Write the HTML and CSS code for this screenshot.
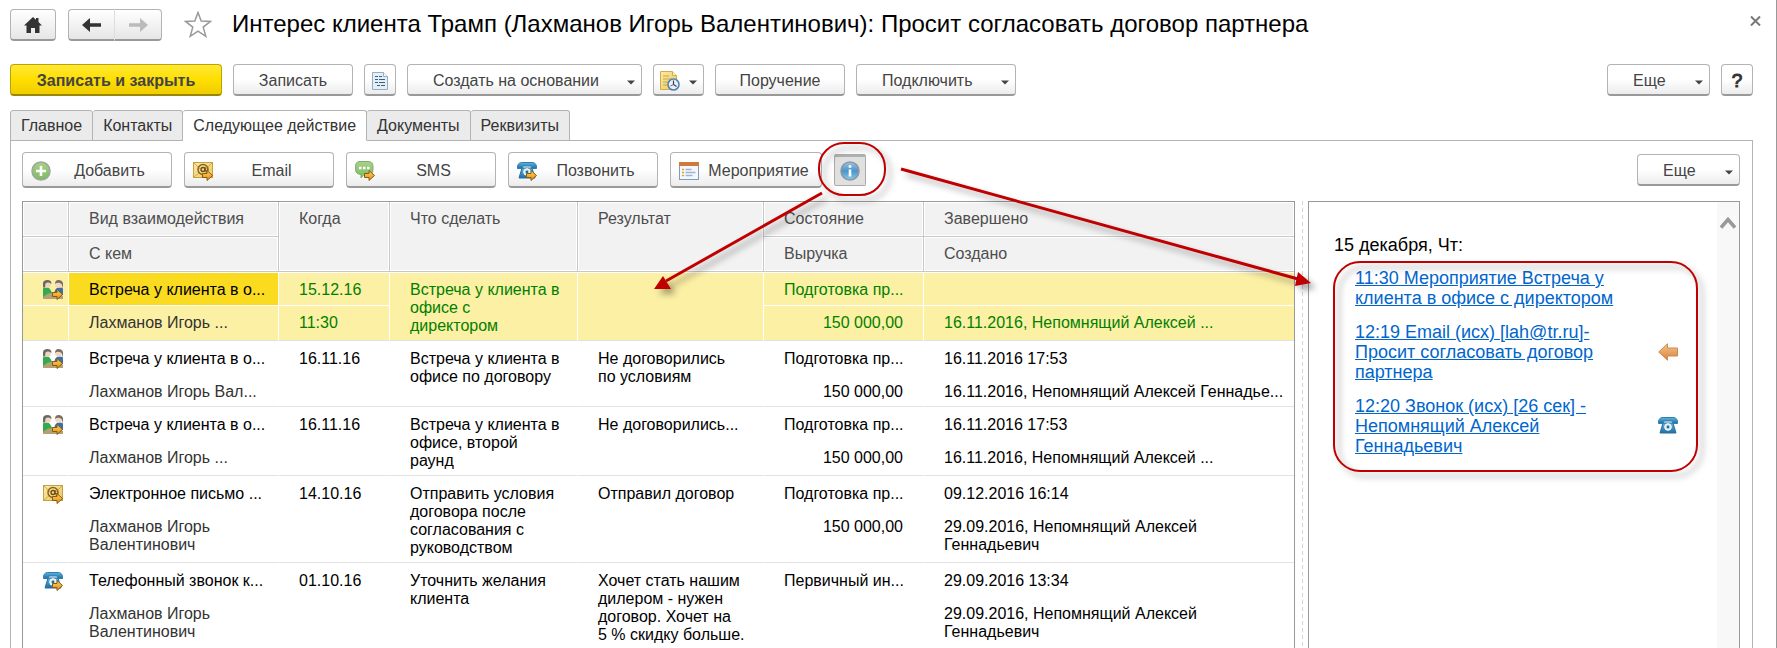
FILE: index.html
```
<!DOCTYPE html>
<html lang="ru">
<head>
<meta charset="utf-8">
<title>Интерес клиента Трамп</title>
<link rel="stylesheet" href="styles.css">
</head>
<body>
<svg class="defs" aria-hidden="true">
  <defs>
    <linearGradient id="gold" x1="0" y1="0" x2="0" y2="1"><stop offset="0" stop-color="#ffd766"/><stop offset="1" stop-color="#e08a10"/></linearGradient>
    <linearGradient id="blue" x1="0" y1="0" x2="0" y2="1"><stop offset="0" stop-color="#5fb4e0"/><stop offset="1" stop-color="#1d6ea3"/></linearGradient>
    <linearGradient id="sky" x1="0" y1="0" x2="0" y2="1"><stop offset="0" stop-color="#9cc4e4"/><stop offset=".5" stop-color="#4a94cc"/><stop offset="1" stop-color="#86cdec"/></linearGradient>
    <linearGradient id="green" x1="0" y1="0" x2="0" y2="1"><stop offset="0" stop-color="#a9d08e"/><stop offset="1" stop-color="#7dbb5e"/></linearGradient>
    <linearGradient id="paper" x1="0" y1="0" x2="1" y2="1"><stop offset="0" stop-color="#fbe9a6"/><stop offset="1" stop-color="#ecc85f"/></linearGradient>
    <linearGradient id="orange" x1="0" y1="0" x2="0" y2="1"><stop offset="0" stop-color="#f6c48e"/><stop offset="1" stop-color="#d98338"/></linearGradient>
    <symbol id="go" viewBox="0 0 20 20"><path d="M9.500 12.500h4.500v-3l5.500 5-5.500 5v-3H9.500z" fill="url(#gold)" stroke="#8a5a10"/></symbol>
    <symbol id="i-mail" viewBox="0 0 20 20"><rect x=".5" y="1.500" width="19" height="15" fill="url(#paper)" stroke="#c9a040"/><path d="M1 2l6 6M19 2l-6 6M1 16l6-5" stroke="#d3ab4e" fill="none"/><circle cx="10" cy="8.500" r="5" fill="none" stroke="#8a6420" stroke-width="1.500"/><circle cx="10" cy="8.500" r="2" fill="none" stroke="#6e4d14" stroke-width="1.400"/><path d="M12 6v3.500q1.500 1.500 3-1" fill="none" stroke="#6e4d14" stroke-width="1.200"/><use href="#go"/></symbol>
    <symbol id="i-phone-plain" viewBox="0 0 20 20"><path d="M5 7h10l3 10H2z" fill="url(#blue)" stroke="#2b6f9c"/><path d="M.5 7.500Q0 2 4.500 1.500h11Q20 2 19.500 7.500H15L14 5H6L5 7.500z" fill="url(#blue)" stroke="#2f7eae"/><circle cx="10" cy="11" r="3.300" fill="#cfe8f6" stroke="#fff"/><circle cx="10" cy="11" r="1.400" fill="#256c9b"/></symbol>
    <symbol id="i-phone" viewBox="0 0 20 20"><use href="#i-phone-plain"/><use href="#go"/></symbol>
    <symbol id="i-people" viewBox="0 0 20 20"><path d="M0 19v-3l5-4h10l5 4v3z" fill="#b3a073"/><path d="M0 17V9q0-1.500 3-1.500h2q2.500 1 4 5.500l-4 .5z" fill="#35a852"/><path d="M20 15V8.500q-1-1-3-1h-2q-3 1-3.500 4.500l4 2z" fill="#3b6fa8"/><circle cx="4.500" cy="4.500" r="3.300" fill="#ecd6bd"/><circle cx="15.500" cy="4.500" r="3.300" fill="#f0d9c2"/><path d="M0 7.500V3Q.5 0 4.500 0T8.500 4Q5 1.500 2.500 3.500L2 7.500z" fill="#6b6a62"/><path d="M12 4Q12 0 15.500 0T20 3v5.500L18.500 4Q15 1.500 12 4z" fill="#7d6f62"/><use href="#go"/></symbol>
    <symbol id="caret" viewBox="0 0 8 5"><path d="M0 .5h8L4 4.500z" fill="#444"/></symbol>
  </defs>
</svg>

<main class="window">
  <header class="title-bar">
    <button class="btn icon-btn home" aria-label="Домой"><svg width="18" height="16" viewBox="0 0 18 16"><path d="M9 0L0 8.500h2.500V16H7v-5h4v5h4.500V8.500H18L14.500 5V1h-2.500v1.800z" fill="#333"/></svg></button>
    <div class="nav-pair">
      <button class="btn icon-btn" aria-label="Назад"><svg width="19" height="14" viewBox="0 0 19 14"><path d="M0 7l8-7v5.200h11v3.600H8V14z" fill="#333"/></svg></button>
      <button class="btn icon-btn" aria-label="Вперед"><svg width="19" height="14" viewBox="0 0 19 14"><path d="M19 7l-8-7v5.200H0v3.600h11V14z" fill="#bbb"/></svg></button>
    </div>
    <button class="star" aria-label="Избранное"><svg width="28" height="27" viewBox="0 0 28 27"><path d="M14 1.500l3.200 8.500 9.300.4-7.300 5.700 2.600 9.200L14 20.100l-7.800 5.200 2.600-9.200L1.500 10.400l9.300-.4z" fill="#fff" stroke="#999" stroke-width="1.500"/></svg></button>
    <h1>Интерес клиента Трамп (Лахманов Игорь Валентинович): Просит согласовать договор партнера</h1>
    <button class="close" aria-label="Закрыть"><svg width="11" height="10" viewBox="0 0 11 10"><path d="M1 .5l9 9M10 .5l-9 9" stroke="#777" stroke-width="2"/></svg></button>
  </header>

  <div class="command-bar">
    <button class="btn primary">Записать и закрыть</button>
    <button class="btn save">Записать</button>
    <button class="btn icon-btn square" aria-label="Отчет"><svg width="16" height="18" viewBox="0 0 16 18"><path d="M.5.500h11l4 4v13H.5z" fill="#e3eef6" stroke="#8fafc6"/><path d="M11.500.500v4h4" fill="#fff" stroke="#8fafc6"/><path d="M3 4.500h3M7 4.500h3M3 7.500h3M7 7.500h6M3 10.500h3M7 10.500h6M5 13.500h3M9 13.500h4" stroke="#3d5f80" stroke-width="1.200"/></svg></button>
    <button class="btn menu create"><span>Создать на основании</span><svg class="caret"><use href="#caret"/></svg></button>
    <button class="btn menu remind" aria-label="Напоминание"><svg width="20" height="20" viewBox="0 0 20 20"><path d="M.5.500h12l4 4v14H.5z" fill="url(#paper)" stroke="#d2ad4a"/><path d="M12.500.500v4h4" fill="#fff5cc" stroke="#d2ad4a"/><path d="M3 5h6M3 8h9M3 11h5M3 14h4" stroke="#c7a548"/><circle cx="13.500" cy="13.500" r="5.500" fill="#e8f1fa" stroke="#4f83b8" stroke-width="1.600"/><path d="M13.500 9.500v4l3 2" fill="none" stroke="#345" stroke-width="1.200"/><path d="M13.500 13.500L10.500 15" stroke="#d33"/></svg><svg class="caret"><use href="#caret"/></svg></button>
    <button class="btn task">Поручение</button>
    <button class="btn menu connect"><span>Подключить</span><svg class="caret"><use href="#caret"/></svg></button>
    <button class="btn menu more push"><span>Еще</span><svg class="caret"><use href="#caret"/></svg></button>
    <button class="btn square help">?</button>
  </div>

  <div class="tabs" role="tablist">
    <button class="tab" role="tab">Главное</button>
    <button class="tab" role="tab">Контакты</button>
    <button class="tab active" role="tab" aria-selected="true">Следующее действие</button>
    <button class="tab" role="tab">Документы</button>
    <button class="tab" role="tab">Реквизиты</button>
  </div>

  <section class="panel">
    <div class="toolbar">
      <button class="btn tool"><svg width="20" height="20" viewBox="0 0 20 20"><circle cx="10" cy="10" r="9" fill="url(#green)" stroke="#9aa89a" stroke-width="1.500"/><path d="M10 5v10M5 10h10" stroke="#fff" stroke-width="2.600"/></svg><span>Добавить</span></button>
      <button class="btn tool"><svg width="20" height="20"><use href="#i-mail"/></svg><span>Email</span></button>
      <button class="btn tool"><svg width="20" height="20" viewBox="0 0 20 20"><path d="M5 .5h8q5 0 5 5v3q0 5-5 5H9L6 17v-3.500Q.5 13 .5 8.500v-3q0-5 4.500-5z" fill="url(#green)" stroke="#7fae68"/><path d="M4 7h2.500M8 7h2.500M12 7h2.500" stroke="#fff" stroke-width="2.400"/><use href="#go"/></svg><span>SMS</span></button>
      <button class="btn tool"><svg width="20" height="20"><use href="#i-phone"/></svg><span>Позвонить</span></button>
      <button class="btn tool event"><svg width="20" height="20" viewBox="0 0 20 20"><rect x=".5" y="1.500" width="19" height="17" fill="#f4f8fc" stroke="#7d9cba"/><path d="M0 1h20v4H0z" fill="#cf7a3a"/><path d="M3 8.500h2M3 11.500h2M3 14.500h2" stroke="#e0a030" stroke-width="1.500"/><path d="M6.500 8.500h6M6.500 11.500h10M6.500 14.500h7" stroke="#9fb4cc" stroke-width="1.300"/></svg><span>Мероприятие</span></button>
      <button class="btn square pressed" aria-label="Информация" aria-pressed="true"><svg width="20" height="20" viewBox="0 0 20 20"><circle cx="10" cy="10" r="9" fill="url(#sky)" stroke="#8f999f" stroke-width="1.600"/><path d="M10 4.300v2.400M10 8.500v7" stroke="#fff" stroke-width="2.600"/></svg></button>
      <button class="btn menu more push"><span>Еще</span><svg class="caret"><use href="#caret"/></svg></button>
    </div>

    <div class="split">
      <div class="grid-box">
        <table>
          <colgroup><col class="c-icon"><col class="c-kind"><col class="c-when"><col class="c-todo"><col class="c-result"><col class="c-state"><col></colgroup>
          <thead>
            <tr><th></th><th>Вид взаимодействия</th><th rowspan="2">Когда</th><th rowspan="2">Что сделать</th><th rowspan="2">Результат</th><th>Состояние</th><th>Завершено</th></tr>
            <tr><th></th><th>С кем</th><th>Выручка</th><th>Создано</th></tr>
          </thead>
          <tbody class="selected">
            <tr class="first"><td class="ico"><svg width="20" height="20"><use href="#i-people"/></svg></td><td class="current">Встреча у клиента в о...</td><td>15.12.16</td><td rowspan="2">Встреча у клиента в<br>офисе с<br>директором</td><td rowspan="2"></td><td>Подготовка пр...</td><td></td></tr>
            <tr class="three"><td></td><td class="who">Лахманов Игорь ...</td><td>11:30</td><td class="num">150 000,00</td><td>16.11.2016, Непомнящий Алексей ...</td></tr>
          </tbody>
          <tbody>
            <tr class="first"><td class="ico"><svg width="20" height="20"><use href="#i-people"/></svg></td><td>Встреча у клиента в о...</td><td>16.11.16</td><td rowspan="2">Встреча у клиента в<br>офисе по договору</td><td rowspan="2">Не договорились<br>по условиям</td><td>Подготовка пр...</td><td>16.11.2016 17:53</td></tr>
            <tr class="two"><td></td><td class="who">Лахманов Игорь Вал...</td><td></td><td class="num">150 000,00</td><td>16.11.2016, Непомнящий Алексей Геннадье...</td></tr>
          </tbody>
          <tbody>
            <tr class="first"><td class="ico"><svg width="20" height="20"><use href="#i-people"/></svg></td><td>Встреча у клиента в о...</td><td>16.11.16</td><td rowspan="2">Встреча у клиента в<br>офисе, второй<br>раунд</td><td rowspan="2">Не договорились...</td><td>Подготовка пр...</td><td>16.11.2016 17:53</td></tr>
            <tr class="three"><td></td><td class="who">Лахманов Игорь ...</td><td></td><td class="num">150 000,00</td><td>16.11.2016, Непомнящий Алексей ...</td></tr>
          </tbody>
          <tbody>
            <tr class="first"><td class="ico"><svg width="20" height="20"><use href="#i-mail"/></svg></td><td>Электронное письмо ...</td><td>14.10.16</td><td rowspan="2">Отправить условия<br>договора после<br>согласования с<br>руководством</td><td rowspan="2">Отправил договор</td><td>Подготовка пр...</td><td>09.12.2016 16:14</td></tr>
            <tr class="four"><td></td><td class="who">Лахманов Игорь<br>Валентинович</td><td></td><td class="num">150 000,00</td><td>29.09.2016, Непомнящий Алексей<br>Геннадьевич</td></tr>
          </tbody>
          <tbody>
            <tr class="first"><td class="ico"><svg width="20" height="20"><use href="#i-phone"/></svg></td><td>Телефонный звонок к...</td><td>01.10.16</td><td rowspan="2">Уточнить желания<br>клиента</td><td rowspan="2">Хочет стать нашим<br>дилером - нужен<br>договор. Хочет на<br>5 % скидку больше.</td><td>Первичный ин...</td><td>29.09.2016 13:34</td></tr>
            <tr class="four"><td></td><td class="who">Лахманов Игорь<br>Валентинович</td><td></td><td></td><td>29.09.2016, Непомнящий Алексей<br>Геннадьевич</td></tr>
          </tbody>
        </table>
      </div>
      <div class="splitter"></div>
      <aside class="history">
        <div class="feed">
          <h2>15 декабря, Чт:</h2>
          <div class="entry"><a href="#">11:30 Мероприятие Встреча у<br>клиента в офисе с директором</a></div>
          <div class="entry"><a href="#">12:19 Email (исх) [lah@tr.ru]-<br>Просит согласовать договор<br>партнера</a><svg width="20" height="18" viewBox="0 0 20 18"><path d="M.7 9L9.500.800V5H19.500v8H9.500v4.200z" fill="url(#orange)" stroke="#c98b55"/></svg></div>
          <div class="entry"><a href="#">12:20 Звонок (исх) [26 сек] -<br>Непомнящий Алексей<br>Геннадьевич</a><svg width="20" height="20"><use href="#i-phone-plain"/></svg></div>
        </div>
        <div class="scroll"><svg width="16" height="13" viewBox="0 0 16 13"><path d="M1 11.500L8 3.500l7 8" fill="none" stroke="#999" stroke-width="3.600"/></svg></div>
      </aside>
    </div>
  </section>

  <svg class="marks" width="1777" height="648" viewBox="0 0 1777 648" aria-hidden="true">
    <g fill="none" stroke="#c00000" stroke-width="2">
      <rect x="819" y="143" width="66" height="52" rx="25"/>
      <rect x="1334" y="262" width="363" height="209" rx="26"/>
      <path d="M822 193L666 281M901 169L1298 279" stroke-width="3"/>
    </g>
    <path d="M654 289l9-13 8 13zM1311 283l-13-11-3 14z" fill="#c00000"/>
  </svg>
</main>
</body>
</html>
```
FILE: styles.css
```
* { box-sizing: border-box; }
body { margin: 0; background: #fff; color: #000; font: 16px/18px "Liberation Sans", Arial, sans-serif; }
button { font: inherit; margin: 0; padding: 0; }
svg { display: block; flex: none; }
.defs { position: absolute; width: 0; height: 0; }

.window { position: relative; height: 100vh; overflow: hidden; display: flex; flex-direction: column; padding: 9px 23px 0 10px; border-right: 1px solid #999; }

.btn { display: flex; align-items: center; justify-content: center; height: 32px; padding-top: 2px; border: 1px solid #b3b3b3; border-bottom: 2px solid #999; border-radius: 4px; background: linear-gradient(#fff 50%, #ececec); color: #444; white-space: nowrap; }

.title-bar { display: flex; align-items: center; height: 31px; }
.home { width: 46px; background: linear-gradient(#fff, #e6e6e6); }
.nav-pair { display: flex; margin-left: 12px; }
.nav-pair .btn { width: 47px; background: linear-gradient(#fff, #e6e6e6); }
.nav-pair .btn:first-child { border-radius: 4px 0 0 4px; border-right-color: #ddd; }
.nav-pair .btn:last-child { border-radius: 0 4px 4px 0; border-left: 0; }
.star { margin-left: 22px; border: 0; background: none; }
h1 { flex: 1; margin: 0 0 0 20px; padding-bottom: 2px; font-size: 24px; line-height: 28px; font-weight: 400; white-space: nowrap; }
.close { border: 0; background: none; align-self: flex-start; padding: 7px 0; margin-right: -8px; }

.command-bar { display: flex; gap: 11px; margin-top: 24px; }
.primary { width: 212px; background: linear-gradient(#ffe836, #fedf00 50%, #efcd00); border-color: #bba400; border-bottom-color: #9a8700; font-weight: 700; }
.save { width: 120px; }
.square { width: 32px; }
.create { width: 235px; }
.remind { width: 51px; }
.task { width: 130px; }
.connect { width: 160px; }
.more { width: 103px; }
.push { margin-left: auto; }
.menu { justify-content: space-between; padding: 2px 6px 0 25px; }
.menu.remind { padding-left: 6px; }
.caret { width: 8px; height: 5px; margin-top: 4px; }
.help { font-size: 19px; color: #333; -webkit-text-stroke: 1px #333; }

.tabs { display: flex; margin-top: 14px; height: 31px; position: relative; z-index: 1; margin-bottom: -1px; }
.tab { height: 31px; padding: 1px 10px 0; border: 1px solid #b3b3b3; border-left-width: 0; background: #ebebeb; color: #333; border-radius: 3px 3px 0 0; white-space: nowrap; }
.tab:first-child { border-left-width: 1px; }
.tab.active { background: #fff; border-bottom-color: #fff; }

.panel { flex: 1; min-height: 0; display: flex; flex-direction: column; padding: 11px 12px 0 11px; border: 1px solid #b3b3b3; border-bottom: 0; }
.toolbar { display: flex; gap: 12px; align-items: center; }
.tool { width: 150px; height: 36px; padding: 2px 3px 0 8px; }
.tool.event { width: 152px; }
.tool span { flex: 1; text-align: center; }
.pressed { padding-top: 0; background: #e0e0e0; border: 1px solid #aaa; border-top: 3px solid #b0b0b0; border-radius: 2px; }

.split { flex: 1; min-height: 0; display: flex; margin-top: 13px; }
.grid-box { flex: 1; min-width: 0; overflow: hidden; border: 1px solid #999; border-bottom: 0; }
table { width: 100%; table-layout: fixed; border-collapse: separate; border-spacing: 0; }
.c-icon { width: 46px; }
.c-kind { width: 210px; }
.c-when { width: 111px; }
.c-todo { width: 188px; }
.c-result { width: 186px; }
.c-state { width: 160px; }
th { height: 35px; padding: 8px 0 0 20px; background: #f2f2f2; border: 1px solid #c8c8c8; border-top: 0; border-left: 0; box-shadow: inset 0 0 0 1px #fff; color: #4d4d4d; font-weight: 400; text-align: left; vertical-align: top; white-space: nowrap; }
th:last-child, td:last-child { border-right: 0; }
td { padding: 9px 0 0 20px; vertical-align: top; white-space: nowrap; border-right: 1px solid transparent; }
.first { height: 33px; }
.two { height: 33px; }
.three { height: 36px; }
.four { height: 54px; }
tbody tr:last-child td, td[rowspan] { border-bottom: 1px solid #e2e2e2; }
.ico { padding: 8px 0 0 20px; }
.who { color: #333; }
.num { text-align: right; padding-right: 20px; }
.selected td { background: #fcf0a5; color: #008000; border-right-color: #fff; box-shadow: inset 0 1px #fff; }
.selected .current { background: #fadb20; color: #000; }
.selected .who { color: #333; }

.splitter { width: 13px; background: linear-gradient(#d4d4d4 60%, transparent 0) 7px 0 / 1px 7px repeat-y; }

.history { width: 432px; display: flex; border: 1px solid #999; border-bottom: 0; }
.feed { flex: 1; padding: 33px 39px 0 25px; }
.scroll { width: 22px; background: #f8f8f8; padding: 14px 3px; }
h2 { margin: 0; font-size: 18px; line-height: 20px; font-weight: 400; }
.entry { display: flex; align-items: center; justify-content: space-between; margin: 14px 0 0 21px; font-size: 18px; line-height: 20px; white-space: nowrap; }
h2 + .entry { margin-top: 13px; }
a { color: #0066cc; text-decoration: underline; }

.marks { position: absolute; left: 0; top: 0; pointer-events: none; filter: drop-shadow(5px 5px 3px rgba(0, 0, 0, .35)); }
```
